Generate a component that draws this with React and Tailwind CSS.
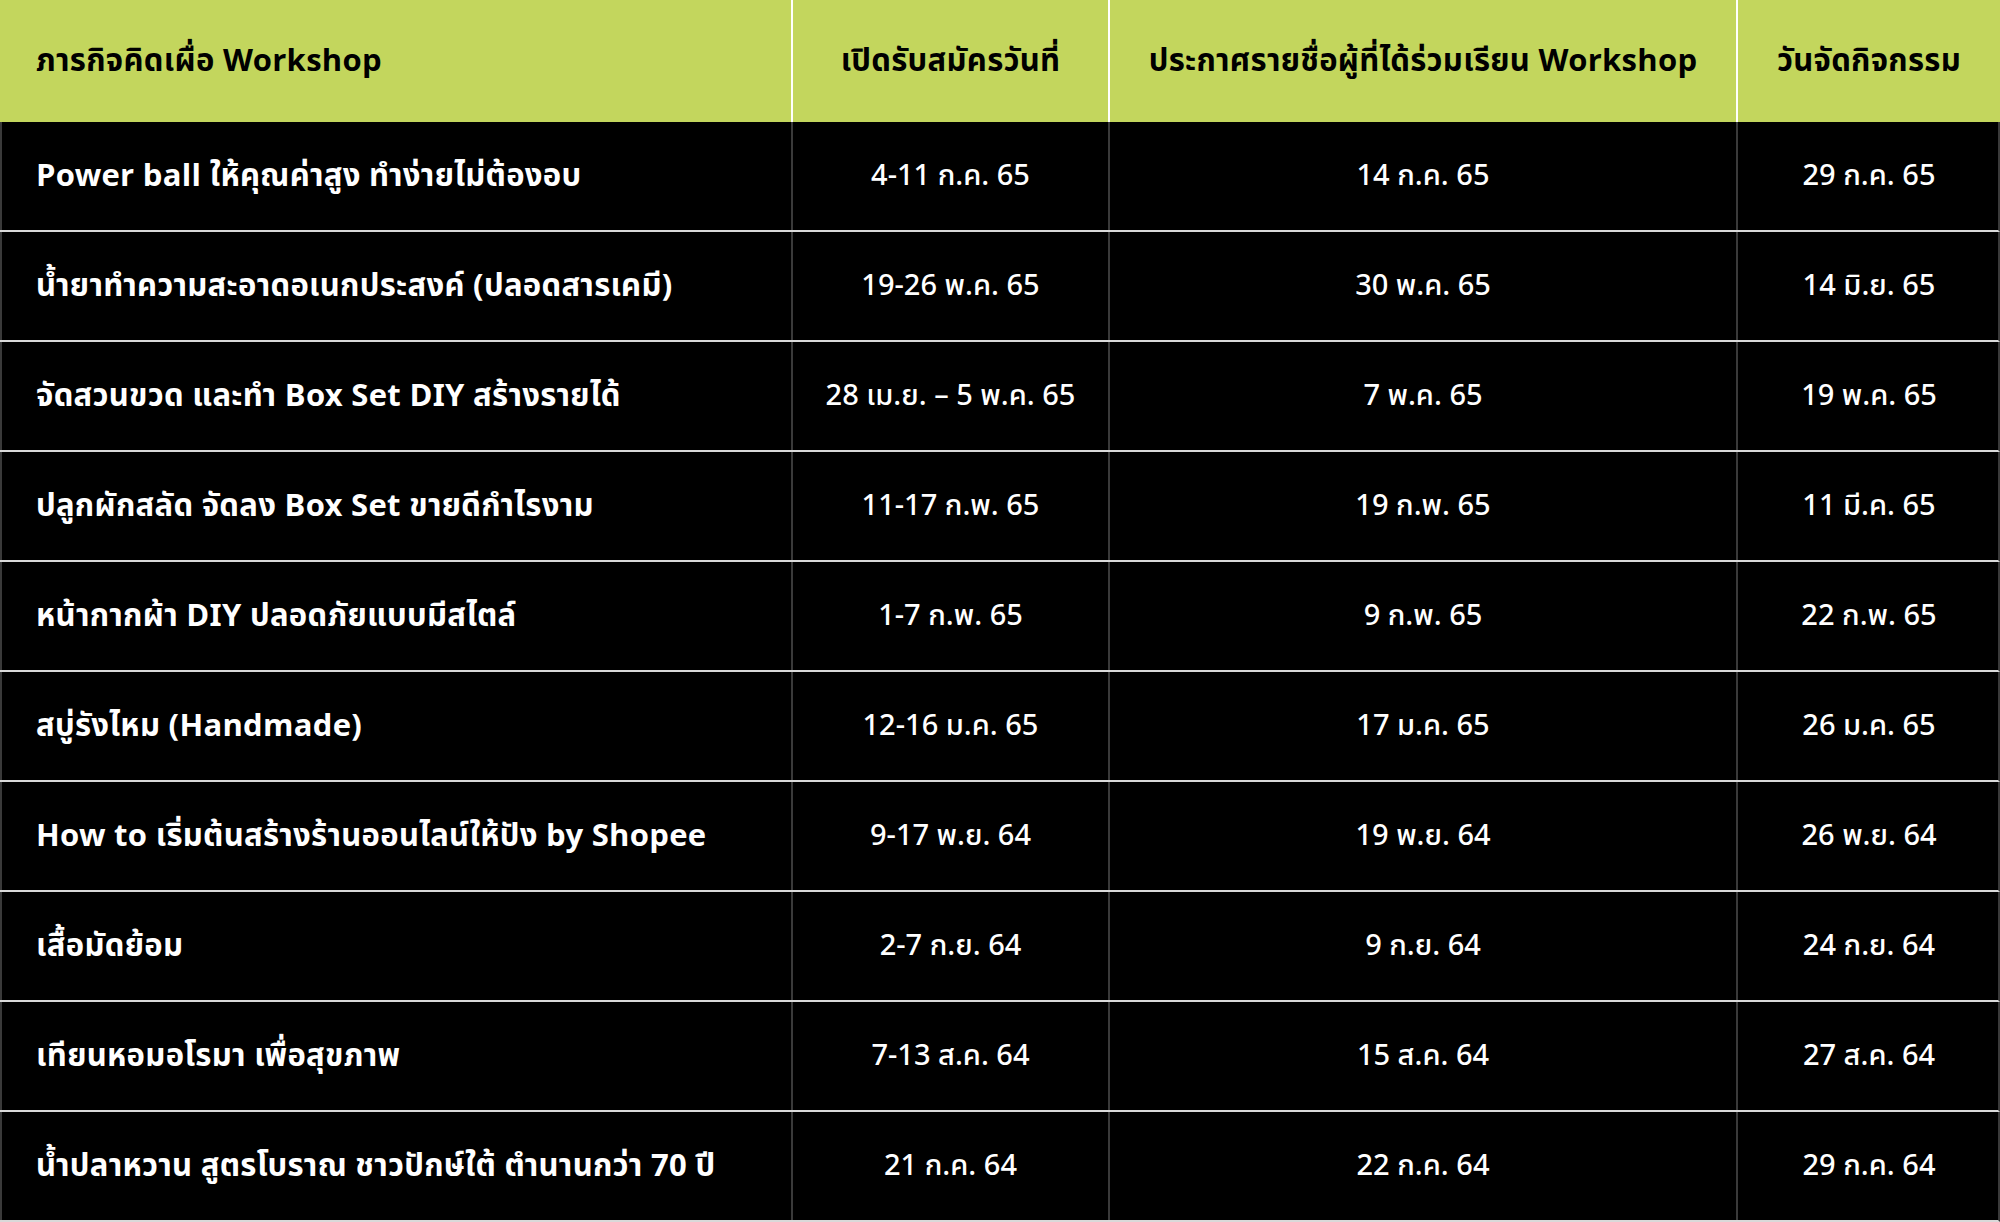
const rows = [
  ["Power ball ให้คุณค่าสูง ทำง่ายไม่ต้องอบ", "4-11 ก.ค. 65", "14 ก.ค. 65", "29 ก.ค. 65"],
  ["น้ำยาทำความสะอาดอเนกประสงค์ (ปลอดสารเคมี)", "19-26 พ.ค. 65", "30 พ.ค. 65", "14 มิ.ย. 65"],
  ["จัดสวนขวด และทำ Box Set DIY สร้างรายได้", "28 เม.ย. – 5 พ.ค. 65", "7 พ.ค. 65", "19 พ.ค. 65"],
  ["ปลูกผักสลัด จัดลง Box Set ขายดีกำไรงาม", "11-17 ก.พ. 65", "19 ก.พ. 65", "11 มี.ค. 65"],
  ["หน้ากากผ้า DIY ปลอดภัยแบบมีสไตล์", "1-7 ก.พ. 65", "9 ก.พ. 65", "22 ก.พ. 65"],
  ["สบู่รังไหม (Handmade)", "12-16 ม.ค. 65", "17 ม.ค. 65", "26 ม.ค. 65"],
  ["How to เริ่มต้นสร้างร้านออนไลน์ให้ปัง by Shopee", "9-17 พ.ย. 64", "19 พ.ย. 64", "26 พ.ย. 64"],
  ["เสื้อมัดย้อม", "2-7 ก.ย. 64", "9 ก.ย. 64", "24 ก.ย. 64"],
  ["เทียนหอมอโรมา เพื่อสุขภาพ", "7-13 ส.ค. 64", "15 ส.ค. 64", "27 ส.ค. 64"],
  ["น้ำปลาหวาน สูตรโบราณ ชาวปักษ์ใต้ ตำนานกว่า 70 ปี", "21 ก.ค. 64", "22 ก.ค. 64", "29 ก.ค. 64"],
];

const cols = "grid grid-cols-[791px_317px_628px_264px]";

export default function App() {
  return (
    <div className="w-[2000px] h-[1222px] bg-black font-['Noto_Sans_Thai','Noto_Sans',sans-serif] overflow-hidden">
      <div className={`${cols} h-[122px] bg-[#c3d65d] text-black text-[31px] font-bold tracking-[0.3px]`}>
        <div className="flex items-center pl-[36px] pt-[2px]">ภารกิจคิดเผื่อ Workshop</div>
        <div className="flex items-center justify-center pt-[2px] border-l-2 border-white">เปิดรับสมัครวันที่</div>
        <div className="flex items-center justify-center pt-[2px] border-l-2 border-white">ประกาศรายชื่อผู้ที่ได้ร่วมเรียน Workshop</div>
        <div className="flex items-center justify-center pt-[2px] border-l-2 border-white">วันจัดกิจกรรม</div>
      </div>
      {rows.map((r) => (
        <div key={r[0]} className={`${cols} h-[110px] border-b-2 border-[#d9d9d9] text-white border-r-2 border-r-[#3a3a3a]`}>
          <div className="flex items-center pl-[34px] pt-[2px] border-l-2 border-[#3a3a3a] text-[31px] font-bold tracking-[0.3px]">{r[0]}</div>
          <div className="flex items-center justify-center pt-[2px] border-l-2 border-[#3a3a3a] text-[29px] font-medium">{r[1]}</div>
          <div className="flex items-center justify-center pt-[2px] border-l-2 border-[#3a3a3a] text-[29px] font-medium">{r[2]}</div>
          <div className="flex items-center justify-center pt-[2px] border-l-2 border-[#3a3a3a] text-[29px] font-medium">{r[3]}</div>
        </div>
      ))}
    </div>
  );
}
